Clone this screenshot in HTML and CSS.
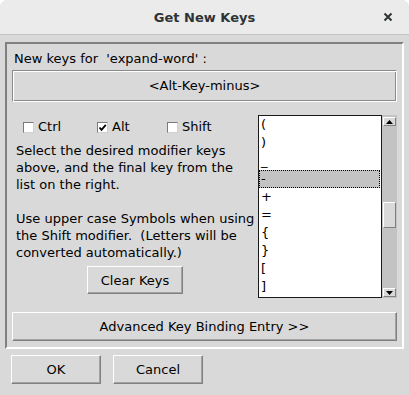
FILE: index.html
```html
<!DOCTYPE html>
<html lang="en">
<head>
    <meta charset="UTF-8">
    <title>Get New Keys</title>
    <link rel="stylesheet" href="styles.css">
</head>
<body>

    <div class="window">
        <div class="titlebar">
            <span></span>
            <span class="title">Get New Keys</span>
            <span class="close">
                <svg width="10" height="10" viewBox="0 0 10 10"><path d="M1.5 1.5L8.5 8.5M8.5 1.5L1.5 8.5" stroke="#2e3436" stroke-width="2"/></svg>
            </span>
        </div>

        <div class="frame">
            <div class="keys-label">New keys for  'expand-word' :</div>
            <div class="keys-string">&lt;Alt-Key-minus&gt;</div>

            <div class="basic">
                <div class="basic-left">
                    <div class="modifiers">
                        <label class="check"><span class="box"></span>Ctrl</label>
                        <label class="check"><span class="box"><svg width="9" height="9" viewBox="0 0 9 9"><path d="M1.5 4.5L3.5 6.8L7.8 1.8" fill="none" stroke="#000" stroke-width="1.8"/></svg></span>Alt</label>
                        <label class="check"><span class="box"></span>Shift</label>
                    </div>
                    <p class="help">Select the desired modifier keys<br>above, and the final key from the<br>list on the right.<br><br>Use upper case Symbols when using<br>the Shift modifier.&nbsp; (Letters will be<br>converted automatically.)</p>
                    <div class="clear-row">
                        <button class="button clear-button">Clear Keys</button>
                    </div>
                </div>

                <div class="list">
                    <div class="list-item">(</div>
                    <div class="list-item">)</div>
                    <div class="list-item">_</div>
                    <div class="list-item list-item-selected">-</div>
                    <div class="list-item">+</div>
                    <div class="list-item">=</div>
                    <div class="list-item">{</div>
                    <div class="list-item">}</div>
                    <div class="list-item">[</div>
                    <div class="list-item">]</div>
                </div>

                <div class="scrollbar">
                    <div class="arrow arrow-up">
                        <svg width="7" height="4" viewBox="0 0 7 4"><polygon points="3.5,0 7,4 0,4" fill="#000"/></svg>
                    </div>
                    <div class="thumb"></div>
                    <div class="arrow arrow-down">
                        <svg width="7" height="4" viewBox="0 0 7 4"><polygon points="0,0 7,0 3.5,4" fill="#000"/></svg>
                    </div>
                </div>
            </div>

            <button class="button advanced-button">Advanced Key Binding Entry &gt;&gt;</button>
        </div>

        <div class="actions">
            <button class="button action-button">OK</button>
            <button class="button action-button">Cancel</button>
        </div>
    </div>

</body>
</html>
```

FILE: styles.css
```css
body {
    margin: 0;
    background-color: #ffffff;
    font-family: 'DejaVu Sans', sans-serif;
    font-size: 13px;
    color: #000000;
}
.window {
    width: 409px;
    height: 395px;
    background-color: #d9d9d9;
    border-radius: 8px 8px 0 0;
    overflow: hidden;
}
.titlebar {
    height: 34px;
    display: grid;
    grid-template-columns: 1fr auto 1fr;
    align-items: center;
    background-color: #ebebeb;
    border-bottom: 1px solid #c4c4c4;
}
.title {
    font-weight: bold;
    color: #2e3436;
}
.close {
    justify-self: end;
    margin-right: 16px;
    display: flex;
}
.frame {
    margin: 7px 5px 0 5px;
    padding: 6px 5px 6px 5px;
    border: 2px solid;
    border-color: #808080 #ffffff #ffffff #808080;
}
.keys-label {
    line-height: 17px;
    padding-left: 2px;
    white-space: pre;
}
.keys-string {
    margin-top: 3px;
    line-height: 30px;
    text-align: center;
    border: 1px solid;
    border-color: #8a8a8a #ffffff #ffffff #8a8a8a;
    box-shadow: inset 1px 1px #ffffff, inset -1px -1px #8a8a8a;
}
.basic {
    margin-top: 13px;
    display: flex;
    height: 183px;
    padding-left: 4px;
}
.basic-left {
    width: 238px;
    margin-right: 4px;
    padding-top: 3px;
}
.modifiers {
    display: grid;
    grid-template-columns: 74px 70px auto;
    padding-left: 7px;
    line-height: 17px;
}
.check {
    display: flex;
    align-items: center;
    gap: 4px;
}
.box {
    width: 11px;
    height: 11px;
    box-sizing: border-box;
    background-color: #ffffff;
    border: 1px solid;
    border-color: #7a7a7a #d0d0d0 #d0d0d0 #7a7a7a;
    display: flex;
    align-items: center;
    justify-content: center;
    margin-top: 1px;
}
.help {
    margin: 7px 0 0 0;
    line-height: 17px;
    white-space: nowrap;
}
.clear-row {
    margin-top: 5px;
    display: flex;
    justify-content: center;
}
.button {
    font-family: 'DejaVu Sans', sans-serif;
    font-size: 13px;
    color: #000000;
    background-color: #d9d9d9;
    padding: 0;
    box-sizing: border-box;
    border: 1px solid;
    border-color: #ffffff #808080 #808080 #ffffff;
    box-shadow: inset -1px -1px #a3a3a3;
}
.clear-button {
    width: 96px;
    height: 28px;
}
.list {
    width: 124px;
    height: 183px;
    box-sizing: border-box;
    background-color: #ffffff;
    border: 1px solid #1a1a1a;
    overflow: hidden;
}
.list-item {
    height: 18px;
    line-height: 18px;
    padding-left: 2px;
}
.list-item-selected {
    box-sizing: border-box;
    margin: 0 1px 0 0;
    padding-left: 1px;
    line-height: 16px;
    background-color: #c3c3c3;
    border: 1px dotted #000000;
}
.scrollbar {
    width: 15px;
    height: 183px;
    box-sizing: border-box;
    padding: 2px 1px 1px 1px;
    background-color: #c3c3c3;
    display: flex;
    flex-direction: column;
}
.arrow {
    height: 9px;
    box-sizing: border-box;
    background-color: #d9d9d9;
    border: 1px solid;
    border-color: #ffffff #808080 #808080 #ffffff;
    display: flex;
    align-items: center;
    justify-content: center;
}
.arrow-down {
    margin-top: auto;
}
.thumb {
    margin-top: 76px;
    height: 26px;
    box-sizing: border-box;
    background-color: #d9d9d9;
    border: 1px solid;
    border-color: #ffffff #808080 #808080 #ffffff;
}
.advanced-button {
    display: block;
    width: 100%;
    height: 29px;
    margin-top: 14px;
}
.actions {
    display: flex;
    gap: 12px;
    margin-top: 6px;
    padding-left: 11px;
}
.action-button {
    width: 90px;
    height: 29px;
}
```
